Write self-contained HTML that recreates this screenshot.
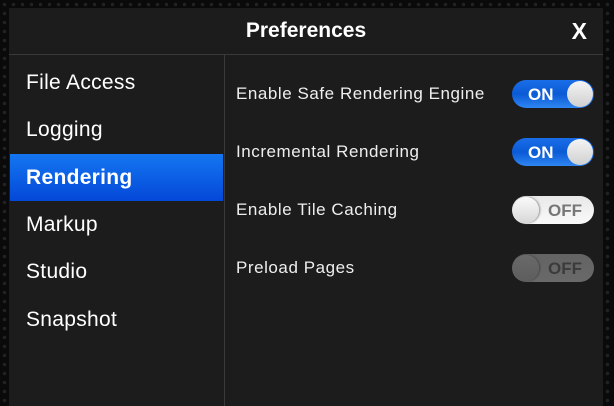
<!DOCTYPE html>
<html><head><style>
body{margin:0;width:614px;height:406px;overflow:hidden;background:#0a0a0a;font-family:"Liberation Sans",sans-serif;position:relative}
.bg{position:absolute;inset:0;background-image:radial-gradient(circle,#222 1.5px,transparent 2px);background-size:9px 9px}
.panel{position:absolute;left:9px;top:8px;width:594px;height:398px;background:#1c1c1c}
.title{position:absolute;left:0;right:0;top:10px;text-align:center;color:#fff;font-weight:bold;font-size:21px;line-height:26px}
.x{position:absolute;right:16px;top:10px;color:#fff;font-weight:bold;font-size:23px;line-height:26px}
.hl{position:absolute;left:0;right:0;top:46px;height:1px;background:#3a3a3a}
.vl{position:absolute;left:215px;top:47px;bottom:0;width:1px;background:#3a3a3a}
.m{position:absolute;left:17px;color:#fff;font-size:21px;letter-spacing:.3px;line-height:24px}
.sel{position:absolute;left:1px;top:146px;width:213px;height:47px;background:linear-gradient(#1476f0,#0448d8)}
.lab{position:absolute;left:227px;color:#eee;font-size:17px;letter-spacing:.55px;line-height:20px}
.t{position:absolute;left:503px;width:82px;height:28px;border-radius:14px;box-sizing:border-box;font-weight:bold;font-size:17px;line-height:29px}
.on{background:linear-gradient(#1a6ee8 0,#0b5ad6 50%,#2f86f2 100%);color:#fff}
.on span{position:absolute;left:16px}
.on i{position:absolute;right:1px;top:1px;width:26px;height:26px;border-radius:50%;background:linear-gradient(#f4f4f4,#d0d0d0)}
.off{background:linear-gradient(#e8e8e8,#fafafa);color:#777}
.off span{position:absolute;right:12px}
.off i{position:absolute;left:1px;top:1px;width:26px;height:26px;border-radius:50%;background:linear-gradient(#fafafa,#d8d8d8);box-shadow:1px 0 2px #888}
.dis{opacity:.35}
</style></head><body>
<div class="bg"></div>
<div class="panel">
<div class="title">Preferences</div><div class="x">X</div>
<div class="hl"></div><div class="vl"></div>
<div class="sel"></div>
<div class="m" style="top:63px">File Access</div>
<div class="m" style="top:110px">Logging</div>
<div class="m" style="top:158px;font-weight:bold">Rendering</div>
<div class="m" style="top:205px">Markup</div>
<div class="m" style="top:252px">Studio</div>
<div class="m" style="top:300px">Snapshot</div>
<div class="lab" style="top:76px">Enable Safe Rendering Engine</div>
<div class="lab" style="top:134px">Incremental Rendering</div>
<div class="lab" style="top:192px">Enable Tile Caching</div>
<div class="lab" style="top:250px">Preload Pages</div>
<div class="t on" style="top:72px"><span>ON</span><i></i></div>
<div class="t on" style="top:130px"><span>ON</span><i></i></div>
<div class="t off" style="top:188px"><span>OFF</span><i></i></div>
<div class="t off dis" style="top:246px"><span>OFF</span><i></i></div>
</div>
</body></html>
